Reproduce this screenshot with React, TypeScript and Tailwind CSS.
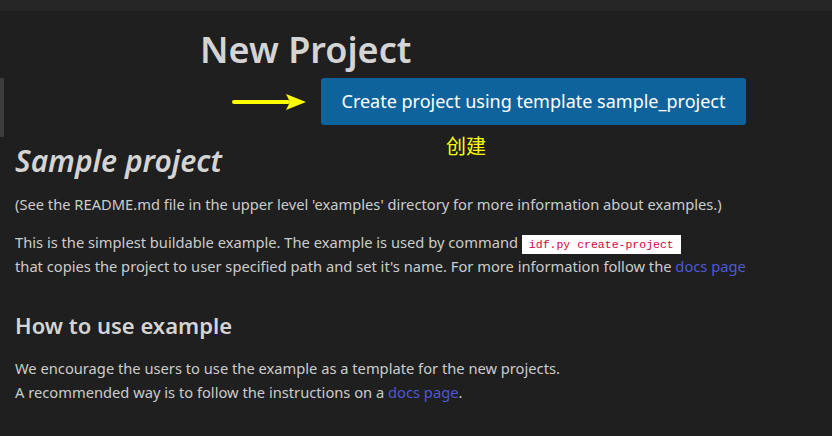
import React from 'react';

function Arrow() {
  return (
    <svg width="76" height="20" viewBox="0 0 76 20" className="shrink-0">
      <line x1="2" y1="10" x2="56" y2="10" stroke="#ffff00" strokeWidth="4" strokeLinecap="round" />
      <polygon points="54,2 74,10 54,18 58,10" fill="#ffff00" />
    </svg>
  );
}

export default function App() {
  const font = { fontFamily: '"Noto Sans", "Open Sans", "Noto Sans CJK SC", sans-serif' };
  return (
    <div className="w-[832px] h-[436px] bg-[#1f1f1f] text-[#cccccc] overflow-hidden relative" style={font}>
      {/* top bar */}
      <div className="h-[11px] bg-[#262626]" />
      {/* left scroll stub */}
      <div className="absolute left-0 top-[78px] w-[4px] h-[59px] bg-[#3c3c3c]" />

      <div className="pl-[200px] pt-[17px]">
        <h1 className="text-[36px] font-semibold leading-[44px] text-[#d4d4d4]">New Project</h1>
      </div>

      <div className="flex items-center mt-[6px] pl-[232px]">
        <Arrow />
        <button className="ml-[13px] w-[425px] h-[47px] bg-[#0e639c] rounded-[3px] text-white text-[18px]">
          Create project using template sample_project
        </button>
      </div>
      <div className="pl-[446px] text-[20px] leading-[24px] text-[#ffff00] mt-[10px]">创建</div>

      <div className="px-[15px]">
        <h1 className="text-[30px] italic font-semibold leading-[34px] text-[#d4d4d4] -mt-[15px]">Sample project</h1>
        <p className="text-[14.7px] leading-[22px] mt-[15px]">
          (See the README.md file in the upper level 'examples' directory for more information about examples.)
        </p>
        <p className="text-[14.7px] leading-[24px] mt-[15px]">
          This is the simplest buildable example. The example is used by command{' '}
          <code
            className="bg-white text-[#d6003a] text-[11.5px] leading-[14px] px-[7px] py-[3px]"
            style={{ fontFamily: '"Liberation Mono", "DejaVu Sans Mono", monospace' }}
          >
            idf.py create-project
          </code>
          <br />
          that copies the project to user specified path and set it's name. For more information follow the{' '}
          <a className="text-[#4d58d6]">docs page</a>
        </p>
        <h2 className="text-[22px] font-semibold leading-[32px] text-[#d4d4d4] mt-[31px]">How to use example</h2>
        <p className="text-[14.7px] leading-[24px] mt-[15px]">
          We encourage the users to use the example as a template for the new projects.
          <br />
          A recommended way is to follow the instructions on a <a className="text-[#4d58d6]">docs page</a>.
        </p>
      </div>
    </div>
  );
}
